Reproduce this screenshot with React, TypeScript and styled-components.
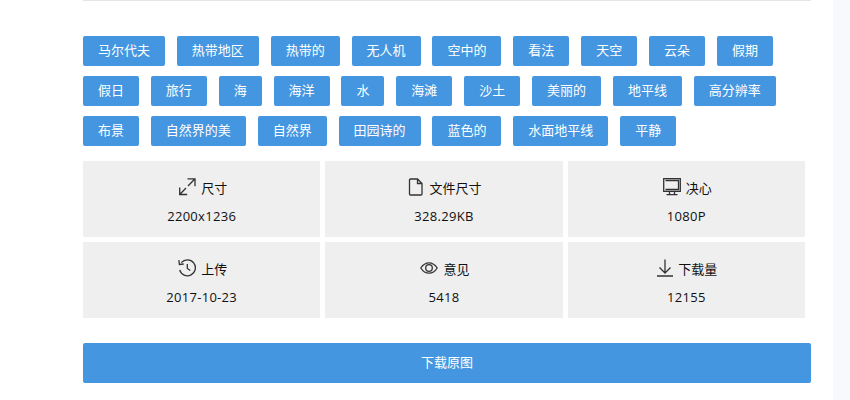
import React from "react";
import styled, { createGlobalStyle } from "styled-components";

const Global = createGlobalStyle`
  html, body { margin: 0; padding: 0; background: #fff; }
  body { font-family: "Open Sans", "Noto Sans CJK SC", sans-serif; font-size: 13px; }
`;

const Page = styled.div`
  display: flex;
  width: 850px;
  height: 400px;
  overflow: hidden;
  background: #f8f9fc;
`;

const Main = styled.main`
  box-sizing: border-box;
  width: 833px;
  height: 400px;
  padding-left: 83px;
  background: #fff;
`;

const Content = styled.div`
  width: 728px;
`;

const Rule = styled.hr`
  height: 1px;
  margin: 0 0 35px;
  border: 0;
  background: #e5e5e5;
`;

const Tags = styled.div`
  display: flex;
  flex-wrap: wrap;
  gap: 10px 11.85px;
  margin-bottom: 15px;
`;

const Tag = styled.a`
  display: block;
  height: 30px;
  padding: 0 15px;
  border-radius: 2px;
  background: #4596e0;
  color: #fff;
  font-size: 13px;
  line-height: 28px;
  white-space: nowrap;
`;

const InfoGrid = styled.div`
  display: grid;
  grid-template-columns: repeat(3, 1fr);
  gap: 5px;
  width: 722px;
  margin-bottom: 25px;
`;

const Cell = styled.div`
  display: flex;
  flex-direction: column;
  align-items: center;
  height: 76px;
  padding-top: 17px;
  box-sizing: border-box;
  background: #efefef;
  color: #111;
`;

const Label = styled.div`
  display: flex;
  align-items: center;
  gap: 5px;
  height: 20px;
  padding-left: 2px;
  line-height: 20px;
`;

const Value = styled.div`
  margin-top: 8px;
  height: 20px;
  line-height: 20px;
  letter-spacing: 0.3px;
`;

const DownloadButton = styled.button`
  display: block;
  box-sizing: border-box;
  width: 728px;
  height: 40px;
  padding: 0 0 3px;
  border: 0;
  border-radius: 2px;
  background: #4596e0;
  color: #fff;
  font: inherit;
  text-align: center;
`;

const Glyph = styled.svg`
  display: block;
  flex: none;
  margin-top: -2px;
  fill: none;
  stroke: #333;
  stroke-width: 1.3;
`;

const ExpandIcon = () => (
  <Glyph width="18" height="18" viewBox="0 0 18 18">
    <path d="M9.500.8H17v7.500M17 .8 10 8M8 10 1.700 16.500M1.700 9.500v7h7.500" />
  </Glyph>
);
const FileIcon = () => (
  <Glyph width="16" height="18" viewBox="0 0 16 18">
    <path d="M2.500 1h7l4.500 4.500V16a1 1 0 0 1-1 1H2.500a1 1 0 0 1-1-1V2a1 1 0 0 1 1-1ZM9.500 1v4.500H14" />
  </Glyph>
);
const MonitorIcon = () => (
  <Glyph width="18" height="18" viewBox="0 0 18 18">
    <path d="M.7.7h16.600v12.600H.7zM2.500 2.500h13v9h-13M6.500 13.500v2.500M11.500 13.500v2.500M3.500 16.700h11" />
  </Glyph>
);
const HistoryIcon = () => (
  <Glyph width="18" height="18" viewBox="0 0 18 18">
    <path d="M3.300 3.600A8 8 0 1 1 1.700 11M.9 1.200l.5 4.300 4.300-.5M9.300 5v4.500l3 2" />
  </Glyph>
);
const EyeIcon = () => (
  <Glyph width="18" height="12" viewBox="0 0 18 12">
    <path d="M.8 6C3 2.500 5.700.8 9 .8s6 1.700 8.200 5.200c-2.200 3.500-4.900 5.200-8.200 5.200S3 9.500.8 6Z" />
    <circle cx="9" cy="6" r="3.300" />
  </Glyph>
);
const DownloadIcon = () => (
  <Glyph width="16" height="18" viewBox="0 0 16 18">
    <path d="M8 .5v13M2.500 8.500 8 14l5.500-5.500M0 17h16" />
  </Glyph>
);

const tags = [
  "马尔代夫", "热带地区", "热带的", "无人机", "空中的", "看法", "天空", "云朵", "假期",
  "假日", "旅行", "海", "海洋", "水", "海滩", "沙土", "美丽的", "地平线", "高分辨率",
  "布景", "自然界的美", "自然界", "田园诗的", "蓝色的", "水面地平线", "平静",
];

const info = [
  { icon: <ExpandIcon />, label: "尺寸", value: "2200x1236" },
  { icon: <FileIcon />, label: "文件尺寸", value: "328.29KB" },
  { icon: <MonitorIcon />, label: "决心", value: "1080P" },
  { icon: <HistoryIcon />, label: "上传", value: "2017-10-23" },
  { icon: <EyeIcon />, label: "意见", value: "5418" },
  { icon: <DownloadIcon />, label: "下载量", value: "12155" },
];

export default function App() {
  return (
    <Page>
      <Global />
      <Main>
        <Content>
          <Rule />
          <Tags>
            {tags.map((t) => (
              <Tag key={t}>{t}</Tag>
            ))}
          </Tags>
          <InfoGrid>
            {info.map((c) => (
              <Cell key={c.label}>
                <Label>
                  {c.icon}
                  <span>{c.label}</span>
                </Label>
                <Value>{c.value}</Value>
              </Cell>
            ))}
          </InfoGrid>
          <DownloadButton>下载原图</DownloadButton>
        </Content>
      </Main>
    </Page>
  );
}
